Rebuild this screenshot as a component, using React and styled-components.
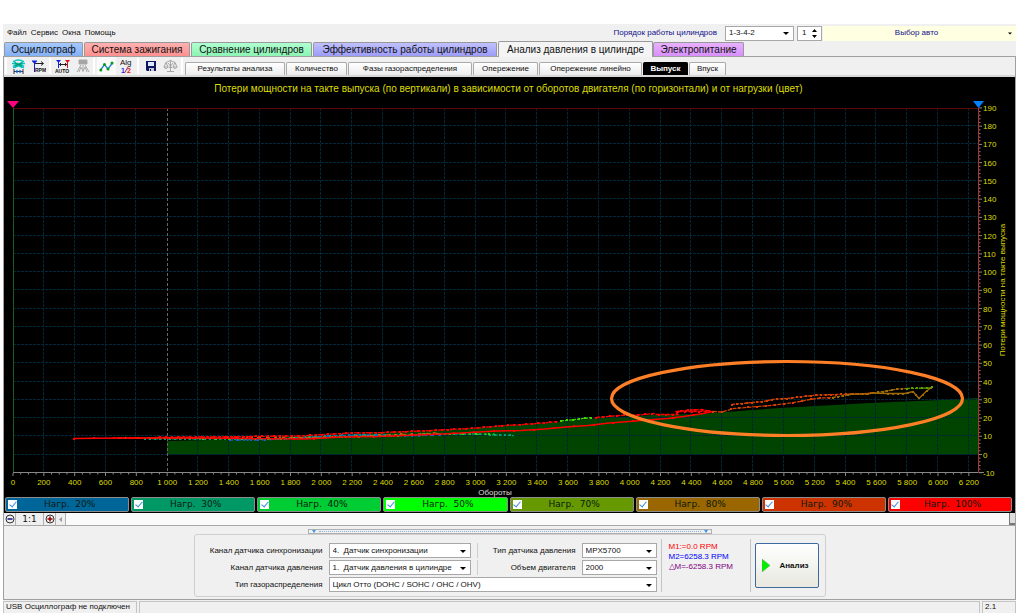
import React from "react";
import styled, { createGlobalStyle } from "styled-components";

const Global = createGlobalStyle`
  * { box-sizing: border-box; }
  body { margin: 0; background: #fff; font: 8px/10px "Liberation Sans", Arial, sans-serif; color: #111; }
  button, select, input { font: inherit; color: inherit; margin: 0; padding: 0; border: 0; border-radius: 0; background: none; }
  svg { display: block; }
`;

const Window = styled.div`
  margin: 24px 8px 0 3px;
  background: #f0f0f0;
`;
const MenuBar = styled.div`
  display: flex;
  align-items: center;
  height: 18px;
`;
const Menu = styled.nav`
  display: flex;
  gap: 4px;
  flex: 1;
  padding-left: 4px;
`;
const MenuItem = styled.button`
  white-space: nowrap;
`;
const OrderLabel = styled.label`
  color: #10108c;
  margin-right: 8px;
`;
const SelectBox = styled.span`
  position: relative;
  display: block;
  width: ${(p) => p.$w || "auto"};
  height: 15px;
  background: #fff;
  border: 1px solid #a8a8a8;
`;
const NativeSelect = styled.select`
  display: block;
  appearance: none;
  width: 100%;
  height: 100%;
  padding: 0 14px 0 3px;
  white-space: pre;
`;
const Arrow = styled.svg`
  position: absolute;
  right: 4px;
  top: 50%;
  margin-top: -1px;
  pointer-events: none;
`;
const Spinner = styled.span`
  display: flex;
  align-items: center;
  width: 25px;
  height: 15px;
  margin: 0 1px 0 3px;
  padding: 0 4px;
  background: #fff;
  border: 1px solid #a8a8a8;
`;
const SpinInput = styled.input`
  width: 10px;
  flex: 1;
  min-width: 0;
  appearance: textfield;
  &::-webkit-inner-spin-button { display: none; }
`;
const CarButton = styled.button`
  position: relative;
  flex: 0 1 193px;
  height: 15px;
  padding-right: 6px;
  background: #ffffe1;
  color: #10108c;
`;

const MainTabs = styled.div`
  display: flex;
  align-items: flex-end;
  height: 15px;
  padding-left: 1px;
  border-bottom: 1px solid #a0a0a0;
`;
const MainTab = styled.button`
  width: ${(p) => p.$w}px;
  height: ${(p) => (p.$active ? 16 : 14)}px;
  margin-right: ${(p) => (p.$active ? 0 : 1)}px;
  margin-bottom: ${(p) => (p.$active ? -1 : 0)}px;
  border: 1px solid #999;
  border-bottom: 0;
  border-radius: 2px 2px 0 0;
  background: ${(p) => p.$bg};
  font-size: 10px;
  line-height: 13px;
  white-space: nowrap;
`;

const Panel = styled.main`
  border: solid #a0a0a0;
  border-width: 0 1px 1px;
`;
const ToolBar = styled.div`
  display: flex;
  align-items: center;
  gap: 1px;
  height: 20px;
  padding: 0 1px;
  border-bottom: 2px solid #d8d8d8;
`;
const Divider = styled.i`
  width: 2px;
  height: 16px;
  margin-right: 1px;
  border: solid;
  border-width: 0 1px;
  border-color: #b4b4b4 #fff;
`;
const ToolButton = styled.button`
  display: grid;
  place-items: center;
  width: 19px;
  height: 18px;
  background: ${(p) => (p.$on ? "#fafafa" : "none")};
`;
const SubTabs = styled.div`
  display: flex;
  align-items: flex-end;
  align-self: flex-end;
  gap: 1px;
`;
const SubTab = styled.button`
  width: ${(p) => p.$w}px;
  height: 13px;
  border: 1px solid ${(p) => (p.$active ? "#000" : "#aaa")};
  border-bottom: 0;
  border-radius: 2px 2px 0 0;
  background: ${(p) => (p.$active ? "#000" : "linear-gradient(#fff, #ececec)")};
  color: ${(p) => (p.$active ? "#fff" : "#111")};
  font-weight: ${(p) => (p.$active ? 700 : 400)};
  white-space: nowrap;
`;

const Plot = styled.section`
  background: #000;
`;
const ChartSvg = styled.svg`
  width: 100%;
  height: auto;
`;
const TitleText = styled.text`
  font: 10px "Liberation Sans", Arial, sans-serif;
  fill: #dcdc00;
`;
const AxisText = styled.text`
  font: 8px "Liberation Sans", Arial, sans-serif;
  fill: ${(p) => p.$fill || "#dcdc00"};
`;
const Legend = styled.div`
  display: grid;
  grid-template-columns: repeat(8, 1fr);
  gap: 2px;
  padding: 0 3px 1px 1px;
`;
const LegendItem = styled.label`
  display: flex;
  align-items: center;
  height: 15px;
  padding: 0 6px 0 2px;
  border: 1px solid #8c8c8c;
  border-radius: 2px;
  background: ${(p) => p.$bg};
  font: 9px/11px "DejaVu Sans", sans-serif;
  color: #0a1a10;
  white-space: pre;
`;
const Check = styled.input`
  appearance: none;
  width: 9px;
  height: 9px;
  background: #fff;
  display: grid;
  place-items: center;
  &:checked::after {
    content: "";
    width: 3px;
    height: 6px;
    border: solid #3c8ce0;
    border-width: 0 1px 1px 0;
    transform: translateY(-1px) rotate(40deg);
  }
`;
const LegendText = styled.span`
  flex: 1;
  text-align: center;
`;

const ZoomBar = styled.div`
  display: flex;
  align-items: stretch;
  height: 13px;
  background: #fafafa;
  border-bottom: 1px solid #a8a8a8;
`;
const ZoomButton = styled.button`
  display: grid;
  place-items: center;
  width: ${(p) => p.$w}px;
  background: #efefef;
  border-right: 1px solid #b0b0b0;
  font: 9px/11px "DejaVu Sans", sans-serif;
`;
const Grip = styled.i`
  width: 6px;
  margin-left: auto;
  background: #ddd;
  border: solid #777;
  border-width: 0 0 2px 1px;
`;

const Bottom = styled.section`
  display: flex;
  flex-direction: column;
  align-items: center;
  padding: 3px 0 2px;
`;
const Splitter = styled.div`
  display: flex;
  align-items: center;
  justify-content: space-between;
  width: 404px;
  max-width: 100%;
  height: 5px;
  padding: 0 3px;
  border: 1px solid #b0b0b0;
`;
const SplitDots = styled.i`
  flex: 1;
  margin: 0 3px;
  border-top: 1px dotted #86b4e0;
`;
const Settings = styled.form`
  display: flex;
  align-items: stretch;
  gap: 4px;
  padding: 4px 6px 4px 12px;
  border: 1px solid #cfcfcf;
  border-radius: 3px;
`;
const Fields = styled.div`
  display: grid;
  grid-template-columns: 116px 142px 99px 75px;
  grid-auto-rows: 15px;
  column-gap: 6px;
  row-gap: 2px;
  align-items: center;
  padding-top: 4px;
`;
const FieldLabel = styled.label`
  text-align: right;
  white-space: nowrap;
`;
const PairLabel = styled(FieldLabel)`
  align-self: stretch;
  padding-top: 3px;
  border-left: 1px solid #cfcfcf;
`;
const WideCell = styled.div`
  grid-column: 2 / -1;
`;
const Rule = styled.i`
  width: 1px;
  background: #c4c4c4;
`;
const Markers = styled.div`
  width: 80px;
  padding: 3px 0 0 3px;
  white-space: nowrap;
`;
const Marker = styled.div`
  color: ${(p) => p.$color};
`;
const AnalyzeButton = styled.button`
  display: flex;
  align-items: center;
  gap: 10px;
  width: 64px;
  height: 45px;
  margin-top: 4px;
  padding-left: 6px;
  border: 1px solid #3c6a9c;
  border-radius: 2px;
  background: linear-gradient(#fff, #e8e8e0);
  font-weight: 700;
`;

const StatusBar = styled.footer`
  display: flex;
  gap: 2px;
  height: 12px;
  margin-top: 1px;
`;
const StatusCell = styled.span`
  width: ${(p) => p.$w || "auto"};
  flex: ${(p) => (p.$grow ? 1 : "none")};
  padding-left: 2px;
  border: 1px solid #c4c4c4;
  border-width: 1px 1px 0 1px;
`;

const Caret = ({ size = 5 }) => (
  <Arrow width={size} height="3" viewBox="0 0 6 3"><path d="M0 0H6L3 3Z" fill="#000" /></Arrow>
);

function Select({ id, value, options, w }) {
  return (
    <SelectBox $w={w}>
      <NativeSelect id={id} defaultValue={value}>
        {(options || [value]).map((o) => <option key={o}>{o}</option>)}
      </NativeSelect>
      <Caret size={6} />
    </SelectBox>
  );
}

const MiniText = styled.text`
  font: ${(p) => (p.$bold ? "bold " : "")}${(p) => p.$size}px "Liberation Sans", Arial, sans-serif;
`;

const icons = {
  fit: (
    <svg width="15" height="15" viewBox="0 0 15 15" fill="none">
      <path d="M3 2.500C5 0.500 10 0.500 12 2.500M1 4.500H14M2 7.500C5 4 10 4 13 7.500M2 2L13 9M13 2L2 9M4 9C5.500 6.500 9.500 6.500 11 9" stroke="#0cc4c4" strokeWidth="1.400" />
      <path d="M4 4L11 7M11 4L4 7" stroke="#0a8a50" />
      <path d="M3 10V15M12 10V15M3 12.500H12" stroke="#333" />
      <path d="M4 12.500L6.500 10.500V14.500ZM11 12.500L8.500 10.500V14.500Z" fill="#1560d0" />
    </svg>
  ),
  range: (
    <svg width="14" height="15" viewBox="0 0 14 15">
      <path d="M0 2H5L2.500 5Z" fill="#1020e0" />
      <path d="M2.500 4V13M0 2H5" stroke="#1020e0" />
      <path d="M3 4.500H11M9 2.500L11.500 4.500L9 6.500" stroke="#222" fill="none" />
      <MiniText $size={5} $bold x="3" y="13" fill="#111">RPM</MiniText>
    </svg>
  ),
  auto: (
    <svg width="16" height="15" viewBox="-1 0 16 15">
      <path d="M0 1H5L2.500 4Z" fill="#1020e0" /><path d="M2.500 3V9" stroke="#1020e0" />
      <path d="M9 1H14L11.500 4Z" fill="#e01010" /><path d="M11.500 3V9" stroke="#e01010" />
      <path d="M3 5.500H11M5 4L3.500 5.500L5 7M9 4L10.500 5.500L9 7" stroke="#222" fill="none" />
      <MiniText $size={5} $bold x="-1" y="14" fill="#111">AUTO</MiniText>
    </svg>
  ),
  lamp: (
    <svg width="14" height="15" viewBox="0 0 14 15" fill="none" stroke="#aaa">
      <path d="M3 1H11V5H3Z" fill="#a4a4a4" />
      <path d="M5 6L1 13M7 6V13M9 6L13 13M3 13L5 8L7 12L9 8L11 13" />
    </svg>
  ),
  graph: (
    <svg width="15" height="13" viewBox="0 0 15 13">
      <path d="M1.500 10L5.500 4.500L9 9L13.500 3" stroke="#2080d0" fill="none" strokeWidth="1.300" />
      <circle cx="1.800" cy="10" r="1.500" fill="#0a9a1a" /><circle cx="5.500" cy="4.500" r="1.500" fill="#0a9a1a" />
      <circle cx="9" cy="9" r="1.500" fill="#0a9a1a" /><circle cx="13" cy="3" r="1.500" fill="#0a9a1a" />
    </svg>
  ),
  alg: (
    <svg width="14" height="16" viewBox="0 0 14 16">
      <MiniText $size={8} x="0" y="7" fill="#111">Alg</MiniText>
      <MiniText $size={7} $bold x="1" y="15" fill="#1530e0">1</MiniText>
      <MiniText $size={7} $bold x="7" y="15" fill="#e02020">2</MiniText>
      <path d="M8 9L4.500 15" stroke="#a02080" />
    </svg>
  ),
  save: (
    <svg width="10" height="10" viewBox="0 0 10 10">
      <path d="M0 0H10V10H1L0 9Z" fill="#0c1860" />
      <path d="M2 1H8V5H2Z" fill="#dfe8ff" /><path d="M3 7H8V10H3Z" fill="#c8c8d8" /><path d="M4 8H5V10H4Z" fill="#0c1860" />
    </svg>
  ),
  scales: (
    <svg width="15" height="14" viewBox="0 0 15 14" fill="none" stroke="#a6a6a6">
      <path d="M7.500 1V12M4 12.500H11M3 3.500L7.500 1.500L12 3.500M3 3.500L1 8H5L3 3.500M12 3.500L10 8H14L12 3.500M1 8C1.500 10 4.500 10 5 8M10 8C10.500 10 13.500 10 14 8M5 4L9 9M10 4L6 9" />
    </svg>
  ),
};

/* Chart geometry: rpm runs left to right, power loss bottom to top. */
const X0 = 13, X1 = 978, YT = 108, YB = 473;
const px = (rpm) => X0 + rpm * 0.15417;
const py = (v) => 454.5 - v * 1.824;
const range = (from, to, step) => Array.from({ length: Math.floor((to - from) / step) + 1 }, (_, i) => from + i * step);
const group = (n) => (n >= 1000 ? `${Math.floor(n / 1000)} ${String(n % 1000).padStart(3, "0")}` : String(n));

const series = [
  { c: "#00a070", step: 5, d: "2 2", p: [[120, 438], [167, 439], [230, 438.5], [270, 439.5], [310, 437], [350, 435.5], [400, 435], [440, 434], [476, 434], [495, 435], [514, 435.600]] },
  { c: "#1a60c0", step: 7, d: "3 5", p: [[230, 440], [260, 440], [300, 438], [340, 435.500], [370, 435], [400, 436], [440, 435]] },
  { c: "#30d010", step: 13, d: "2 6", p: [[125, 437.500], [200, 438.500], [260, 439], [330, 437.500], [400, 435.500], [440, 433.500], [484, 434.500], [500, 434]] },
  { c: "#c86010", step: 11, d: "3 5", p: [[170, 438], [250, 437.500], [320, 437.500], [400, 434.500], [442, 433]] },
  { c: "#ff0000", step: 20, p: [[74, 438.500], [120, 438], [200, 438], [250, 438.500], [305, 439], [343, 437], [378, 436.500], [442, 434], [470, 432.500], [497, 431], [521, 430.500], [545, 429], [566, 427], [588, 425.500], [609, 423], [629, 421.500], [667, 418.500], [684, 416.500], [703, 413.500], [713, 411.500]] },
  { c: "#ff0000", step: 6, d: "3 1", p: [[118, 438], [200, 437], [250, 436.500], [300, 436], [350, 433], [383, 432.500], [420, 431], [450, 429.500], [476, 428], [500, 426], [530, 424], [544, 423], [558, 421.500]] },
  { c: "#40d800", step: 6, d: "3 1", p: [[561, 421], [575, 419.500], [592, 417.500]] },
  { c: "#ff0000", step: 7, d: "4 1", p: [[596, 417.500], [620, 415.500], [640, 415], [654, 413.500], [656, 414.500], [678, 414.500], [676, 411.500], [690, 410], [702, 409.500], [711, 411.500], [676, 411.500]] },
  { c: "#d04000", step: 9, d: "4 1", p: [[713, 411.500], [722, 412], [734, 408.500], [752, 407], [770, 405.500], [787, 403.500], [800, 401.500], [807, 400], [820, 398], [833, 397.500]] },
  { c: "#d04000", step: 5, d: "3 1", p: [[732, 404.500], [747, 403], [763, 401.500], [775, 399], [787, 398.500], [803, 396.500], [818, 395], [837, 394.500], [860, 394], [873, 393]] },
  { c: "#a06c00", step: 5, d: "3 1", p: [[833, 397.500], [850, 394.500], [870, 393.500], [883, 391.500], [898, 389], [907, 388.500]] },
  { c: "#a06c00", step: 5, p: [[873, 393], [887, 393.500], [905, 393.500], [913, 391.500], [919, 398.500], [926, 391.500], [932, 387]] },
  { c: "#60a000", step: 5, d: "3 1", p: [[907, 388.500], [930, 388], [932, 387]] },
];

function walk(points, step) {
  const out = [points[0]];
  let left = step;
  for (let i = 1; i < points.length; i++) {
    const [ax, ay] = points[i - 1];
    const [bx, by] = points[i];
    const len = Math.hypot(bx - ax, by - ay);
    let at = left;
    while (at <= len) {
      out.push([ax + ((bx - ax) * at) / len, ay + ((by - ay) * at) / len]);
      at += step;
    }
    left = at - len;
  }
  return out;
}

function Chart() {
  return (
    <ChartSvg viewBox="4 77 1011 420" role="img" aria-label="Потери мощности на такте выпуска">
      <TitleText x="508.500" y="92" textAnchor="middle">
        Потери мощности на такте выпуска (по вертикали) в зависимости от оборотов двигателя (по горизонтали) и от нагрузки (цвет)
      </TitleText>
      <path d="M167 454.500V441L250 439L350 434L450 430L550 423L593 418.500L654 415L700 414L740 411L780 408L870 403L940 400L978 398V454.500Z" fill="#004400" />
      <g stroke="#002638" strokeDasharray="3 1" shapeRendering="crispEdges">
        {range(200, 6200, 200).filter((r) => r !== 1000).map((r) => <path key={r} d={`M${Math.round(px(r)) - 0.5} ${YT}V${YB}`} />)}
        {range(0, 180, 10).map((v) => <path key={v} d={`M${X0} ${Math.round(py(v)) - 0.5}H${X1}`} />)}
      </g>
      <path d={`M167.500 ${YT}V${YB}`} stroke="#666" strokeDasharray="3 2" />
      <path d={`M${X0} 108.500H${X1}`} stroke="#5c0808" />
      <path d={`M13.500 ${YT}V${YB}`} stroke="#1c5c1c" />
      <path d={`M${X0} 472.500H984`} stroke="#888" />
      <path d={`M978.500 ${YT}V${YB}`} stroke="#b03030" />
      <g stroke="#888">
        {range(0, 6200, 50).map((r) => <path key={r} d={`M${px(r)} 473V${r % 200 ? 474.5 : 476}`} />)}
        {range(-10, 190, 2).map((v) => <path key={v} d={`M979 ${py(v)}H${v % 10 ? 980.5 : 982}`} />)}
      </g>
      {range(0, 6200, 200).map((r) => <AxisText key={r} x={px(r)} y="485" textAnchor="middle">{group(r)}</AxisText>)}
      {range(-10, 190, 10).map((v) => <AxisText key={v} x="983" y={py(v) + 3}>{v}</AxisText>)}
      <AxisText $fill="#ddd" x="495" y="495" textAnchor="middle">Обороты</AxisText>
      <AxisText transform="translate(1005 290) rotate(-90)" textAnchor="middle">Потери мощности на такте выпуска</AxisText>
      {series.map((s, i) => (
        <g key={i}>
          <polyline points={s.p.join(" ")} fill="none" stroke={s.c} strokeWidth="1.300" strokeDasharray={s.d} />
          <g shapeRendering="crispEdges">
            {walk(s.p, s.step).map(([x, y], k) => <rect key={k} x={Math.round(x) - 1} y={Math.round(y) - 1} width="2" height="2" fill={s.c} />)}
          </g>
        </g>
      ))}
      <ellipse cx="787" cy="398.500" rx="175.500" ry="37" fill="none" stroke="#ff7f27" strokeWidth="3.200" />
      <path d="M7 101H19L13 108Z" fill="#ff0080" />
      <path d="M973 101H984L978.500 108Z" fill="#0080ff" />
    </ChartSvg>
  );
}

const mainTabs = [
  ["Осциллограф", 79, "linear-gradient(#a4c8ff, #84b0f4)"],
  ["Система зажигания", 106, "linear-gradient(#ffb0b0, #ff9090)"],
  ["Сравнение цилиндров", 121, "linear-gradient(#b0ffd0, #8cf4b4)"],
  ["Эффективность работы цилиндров", 184, "linear-gradient(#c0c0ff, #9c9cf8)"],
  ["Анализ давления в цилиндре", 155, "#f4f4f4"],
  ["Электропитание", 91, "linear-gradient(#e8b0ff, #d890fc)"],
];
const subTabs = [
  ["Результаты анализа", 100], ["Количество", 61], ["Фазы газораспределения", 124], ["Опережение", 65],
  ["Опережение линейно", 103], ["Выпуск", 45], ["Впуск", 37],
];
const loads = [
  [20, "#006699"], [30, "#009966"], [40, "#00cc33"], [50, "#00ff00"],
  [70, "#669900"], [80, "#996600"], [90, "#cc3300"], [100, "#ff0000"],
];
const tools = [
  [["fit", "Масштаб"], ["range", "Интервал"]],
  [["auto", "Авто"], ["lamp", "Подсветка"]],
  [["graph", "График"], ["alg", "Алгоритм"]],
  [["save", "Сохранить"], ["scales", "Сравнить"]],
];

const ZoomIcon = ({ plus }) => (
  <svg width="10" height="10" viewBox="0 0 10 10" fill="none">
    <circle cx="5" cy="5" r="4" stroke="#333" />
    <path d={plus ? "M2.500 5H7.500M5 2.500V7.500" : "M2.500 5H7.500"} stroke={plus ? "#900" : "#10108c"} strokeWidth="1.500" />
  </svg>
);
const SplitMark = () => <svg width="4" height="3" viewBox="0 0 4 3"><path d="M0 0H4L2 3Z" fill="#3c96f0" /></svg>;

export default function App() {
  return (
    <>
      <Global />
      <Window>
        <MenuBar>
          <Menu>
            {["Файл", "Сервис", "Окна", "Помощь"].map((m) => <MenuItem key={m}>{m}</MenuItem>)}
          </Menu>
          <OrderLabel htmlFor="order">Порядок работы цилиндров</OrderLabel>
          <Select id="order" value="1-3-4-2" w="69px" />
          <Spinner>
            <SpinInput type="number" defaultValue="1" aria-label="Номер цилиндра" />
            <svg width="5" height="9" viewBox="0 0 5 9"><path d="M0 3H5L2.500 0ZM0 6H5L2.500 9Z" /></svg>
          </Spinner>
          <CarButton>Выбор авто<Caret size={4} /></CarButton>
        </MenuBar>
        <MainTabs role="tablist">
          {mainTabs.map(([t, w, bg], i) => (
            <MainTab key={t} role="tab" aria-selected={i === 4} $w={w} $bg={bg} $active={i === 4}>{t}</MainTab>
          ))}
        </MainTabs>
        <Panel>
          <ToolBar>
            <Divider />
            {tools.map((g, i) => (
              <React.Fragment key={i}>
                {g.map(([k, label]) => <ToolButton key={k} aria-label={label} $on={k === "graph"}>{icons[k]}</ToolButton>)}
                <Divider />
              </React.Fragment>
            ))}
            <SubTabs role="tablist">
              {subTabs.map(([t, w]) => (
                <SubTab key={t} role="tab" aria-selected={t === "Выпуск"} $w={w} $active={t === "Выпуск"}>{t}</SubTab>
              ))}
            </SubTabs>
          </ToolBar>
          <Plot>
            <Chart />
            <Legend>
              {loads.map(([n, c]) => (
                <LegendItem key={n} $bg={c}>
                  <Check type="checkbox" defaultChecked />
                  <LegendText>{`Нагр.  ${n}%`}</LegendText>
                </LegendItem>
              ))}
            </Legend>
          </Plot>
          <ZoomBar>
            <ZoomButton $w={12} aria-label="Уменьшить"><ZoomIcon /></ZoomButton>
            <ZoomButton $w={28}>1:1</ZoomButton>
            <ZoomButton $w={12} aria-label="Увеличить"><ZoomIcon plus /></ZoomButton>
            <ZoomButton $w={10} aria-label="Влево">
              <svg width="3" height="5" viewBox="0 0 3 5"><path d="M3 0V5L0 2.500Z" fill="#999" /></svg>
            </ZoomButton>
            <Grip />
          </ZoomBar>
          <Bottom>
            <Splitter><SplitMark /><SplitDots /><SplitMark /></Splitter>
            <Settings onSubmit={(e) => e.preventDefault()}>
              <Fields>
                <FieldLabel htmlFor="sync">Канал датчика синхронизации</FieldLabel>
                <Select id="sync" value={"4.\u00a0 Датчик синхронизации"} />
                <PairLabel htmlFor="sensor">Тип датчика давления</PairLabel>
                <Select id="sensor" value="MPX5700" />
                <FieldLabel htmlFor="press">Канал датчика давления</FieldLabel>
                <Select id="press" value={"1.\u00a0 Датчик давления в цилиндре"} />
                <PairLabel htmlFor="volume">Объем двигателя</PairLabel>
                <Select id="volume" value="2000" />
                <FieldLabel htmlFor="valve">Тип газораспределения</FieldLabel>
                <WideCell><Select id="valve" value="Цикл Отто (DOHC / SOHC / OHC / OHV)" /></WideCell>
              </Fields>
              <Rule />
              <Markers>
                <Marker $color="#f00">M1:=0.0 RPM</Marker>
                <Marker $color="#00f">M2=6258.3 RPM</Marker>
                <Marker $color="#800080">△M=-6258.3 RPM</Marker>
              </Markers>
              <Rule />
              <AnalyzeButton type="submit">
                <svg width="8" height="13" viewBox="0 0 8 13"><path d="M0 0L8 6.500L0 13Z" fill="#00f000" stroke="#60a060" strokeWidth="0.500" /></svg>
                Анализ
              </AnalyzeButton>
            </Settings>
          </Bottom>
        </Panel>
        <StatusBar>
          <StatusCell $w="134px">USB Осциллограф не подключен</StatusCell>
          <StatusCell $grow />
          <StatusCell $w="34px">2.1</StatusCell>
        </StatusBar>
      </Window>
    </>
  );
}
